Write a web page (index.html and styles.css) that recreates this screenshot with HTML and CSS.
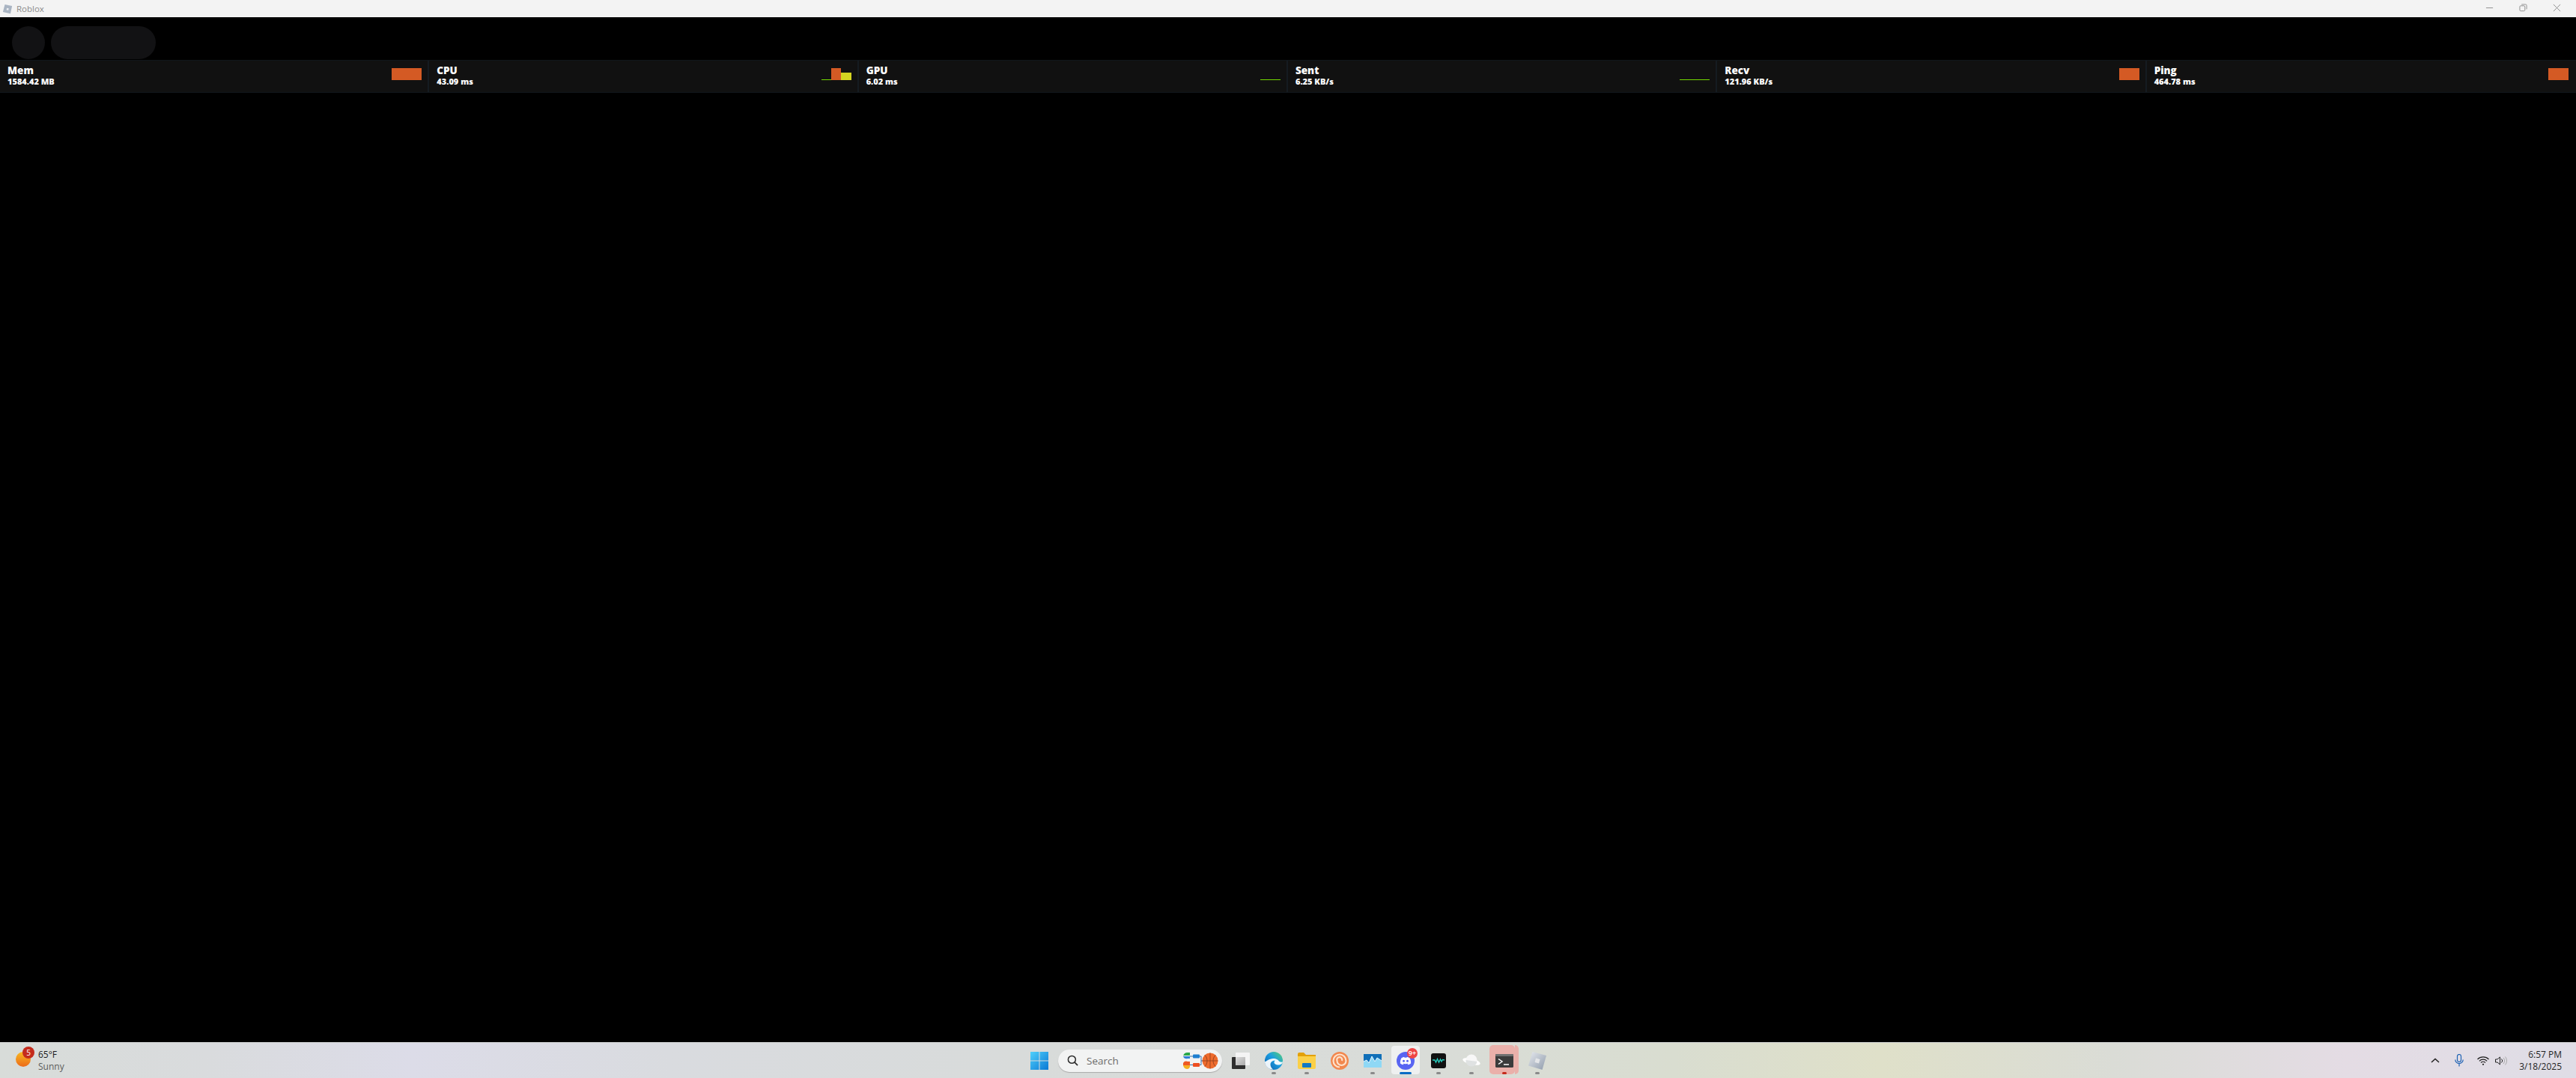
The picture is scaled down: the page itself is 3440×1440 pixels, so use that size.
FILE: index.html
```html
<!doctype html>
<html>
<head>
    <meta charset="utf-8">
    <title>Roblox</title>
    <link rel="stylesheet" href="styles.css">
</head>
<body>
<div class="screen">

    <div class="titlebar">
        <svg class="app-logo" viewBox="0 0 16 16"><path d="M4 1 15 3.500 12.500 15 1 12.500z" fill="#a9b4c2"/><path d="M7 6.500 10 7.200 9.300 10 6.400 9.400z" fill="#eef0f3"/></svg>
        <span class="app-name">Roblox</span>
        <div class="win-btns">
            <svg viewBox="0 0 12 12"><path d="M1 6h10" stroke="#8a8a8a" fill="none"/></svg>
            <svg viewBox="0 0 12 12"><rect x="1" y="3" width="7.500" height="7.500" rx="1.500" stroke="#8a8a8a" fill="none"/><path d="M3.500 1H9.500A1.500 1.500 0 0 1 11 2.500V8" stroke="#8a8a8a" fill="none"/></svg>
            <svg viewBox="0 0 12 12"><path d="M1 1 11 11M11 1 1 11" stroke="#8a8a8a" fill="none"/></svg>
        </div>
    </div>

    <div class="game">
        <div class="topbar">
            <div class="top-circle"></div>
            <div class="top-pill"></div>
        </div>

        <div class="stats">
            <div class="stat">
                <div class="stat-text"><div class="stat-name">Mem</div><div class="stat-val">1584.42 MB</div></div>
                <div class="graph"><i class="bar red wide"></i></div>
            </div>
            <div class="stat">
                <div class="stat-text"><div class="stat-name">CPU</div><div class="stat-val">43.09 ms</div></div>
                <div class="graph"><i class="bar green w13"></i><i class="bar red w13"></i><i class="bar yellow w14"></i></div>
            </div>
            <div class="stat">
                <div class="stat-text"><div class="stat-name">GPU</div><div class="stat-val">6.02 ms</div></div>
                <div class="graph"><i class="bar green w27"></i></div>
            </div>
            <div class="stat">
                <div class="stat-text"><div class="stat-name">Sent</div><div class="stat-val">6.25 KB/s</div></div>
                <div class="graph"><i class="bar green wide"></i></div>
            </div>
            <div class="stat">
                <div class="stat-text"><div class="stat-name">Recv</div><div class="stat-val">121.96 KB/s</div></div>
                <div class="graph"><i class="bar red w27"></i></div>
            </div>
            <div class="stat">
                <div class="stat-text"><div class="stat-name">Ping</div><div class="stat-val">464.78 ms</div></div>
                <div class="graph"><i class="bar red w27"></i></div>
            </div>
        </div>
    </div>

    <div class="taskbar">
        <div class="weather">
            <div class="sun"><span class="sun-badge">5</span></div>
            <div class="weather-text">
                <div class="temp">65°F</div>
                <div class="cond">Sunny</div>
            </div>
        </div>

        <div class="apps">
            <div class="cell start">
                <svg class="i24" viewBox="0 0 24 24"><defs><linearGradient id="win" x1="0" y1="0" x2="1" y2="1"><stop offset="0" stop-color="#4fd0fb"/><stop offset="1" stop-color="#0a78d4"/></linearGradient></defs><path d="M0 0H11.500V11.500H0zM12.500 0H24V11.500H12.500zM0 12.500H11.500V24H0zM12.500 12.500H24V24H12.500z" fill="url(#win)"/></svg>
            </div>

            <div class="search">
                <svg class="search-ico" viewBox="0 0 16 16"><circle cx="6.800" cy="6.800" r="5.300" stroke="#2b2b2b" stroke-width="1.600" fill="none"/><path d="M10.800 10.800 15 15" stroke="#2b2b2b" stroke-width="1.800" fill="none"/></svg>
                <span class="search-text">Search</span>
                <svg class="search-art" viewBox="0 0 48 24">
                    <path d="M1 6a6 6 0 0 1 6-5h3v4H1z" fill="#2aa84a"/><path d="M1 6h9v3H7a5 5 0 0 1-6-3z" fill="#2f7fd6"/>
                    <path d="M1 15a5 5 0 0 1 6-2h3v5H1z" fill="#ee5a24"/><path d="M1 18h9v2a4 4 0 0 1-3 3 6 6 0 0 1-6-5z" fill="#f5b021"/>
                    <rect x="14" y="3.500" width="9" height="5" rx="1" fill="#1f7fd0"/><rect x="14" y="15" width="9" height="5" rx="1" fill="#ee4f22"/>
                    <path d="M10 6h4M10 17.500h4M23 6h2v11.500h-2M25 12h3" stroke="#3a6ea8" fill="none"/>
                    <circle cx="37" cy="12" r="10.500" fill="#ee6c2e"/>
                    <path d="M26.500 12h21M37 1.500v21M30 4.500c4 4 4 11 0 15M44 4.500c-4 4-4 11 0 15" stroke="#8d3c1c" stroke-width=".8" fill="none"/>
                </svg>
            </div>

            <div class="cell">
                <svg class="i24" viewBox="0 0 24 22"><defs><linearGradient id="tv" x1="0" y1="0" x2="1" y2="1"><stop offset="0" stop-color="#dedede"/><stop offset="1" stop-color="#a9a9a9"/></linearGradient></defs><rect x="0" y="6" width="18" height="16" rx="1" fill="#2e2e2e"/><rect x="5" y="0" width="19" height="17" rx="1" fill="#f4f4f4"/><rect x="5" y="6" width="13" height="11" fill="url(#tv)"/></svg>
            </div>

            <div class="cell">
                <svg class="i24" viewBox="0 0 24 24"><defs><linearGradient id="edge" x1="0" y1="1" x2="1" y2="0"><stop offset="0" stop-color="#0c59a4"/><stop offset=".55" stop-color="#1b9de2"/><stop offset="1" stop-color="#5ad36b"/></linearGradient></defs><circle cx="12" cy="12" r="12" fill="url(#edge)"/><path d="M24 13c0 3-3 4.500-6 4.500-3 0-5.500-1.500-5.500-3.500 0-1.200 1-2 1.500-2.300C10 11.300 7.500 14 7.500 17c0 2 1 4.500 3.500 6.500-5 .5-11-4-11-11C0 15 5 9 11 9c5 0 7 2 8 3.500 1.500 1.500 5 1.500 5 .5z" fill="#fff" opacity=".92"/></svg>
                <i class="dot"></i>
            </div>

            <div class="cell">
                <svg class="i24" viewBox="0 0 24 22"><path d="M0 2A2 2 0 0 1 2 0H8L11 3H24V6H0z" fill="#e3a008"/><path d="M0 5H24V20A2 2 0 0 1 22 22H2A2 2 0 0 1 0 20z" fill="#fbd048"/><rect x="6" y="14" width="12" height="6" rx="1" fill="#1279c4"/></svg>
                <i class="dot"></i>
            </div>

            <div class="cell">
                <svg class="i24" viewBox="0 0 24 24"><circle cx="12" cy="12" r="12" fill="#f2884e"/><path d="M12 20.500A8.500 8.500 0 1 1 20.500 12 6 6 0 1 1 8.500 12 3.500 3.500 0 1 1 15 12" stroke="#fde2cc" stroke-width="2.200" fill="none"/></svg>
            </div>

            <div class="cell">
                <svg class="i24" viewBox="0 0 24 18"><rect width="24" height="18" fill="#0f6fb8"/><path d="M0 18V10L4 8 7 12 11 3 15 10 18 5 24 9V18z" fill="#8fd8f5"/><path d="M0 10 4 8 7 12 11 3 15 10 18 5 24 9" stroke="#e6f7ff" fill="none"/></svg>
                <i class="dot"></i>
            </div>

            <div class="cell active">
                <svg class="i24" viewBox="0 0 24 24"><circle cx="12" cy="12" r="12" fill="#5865f2"/><path d="M6.500 8.300C8 7.300 9.500 7 10.200 7l.4.8c1-.2 1.800-.2 2.800 0l.4-.8c.7 0 2.200.3 3.700 1.300 1.300 2.300 1.800 4.800 1.600 7.300-1.300 1-2.600 1.500-3.800 1.700l-.8-1.300c.5-.2.900-.4 1.300-.7-2.800 1.200-5 1.200-7.600 0 .4.300.8.500 1.300.7l-.8 1.300c-1.200-.2-2.500-.7-3.800-1.700-.2-2.500.3-5 1.600-7.300z" fill="#fff"/><circle cx="9.500" cy="12.300" r="1.500" fill="#5865f2"/><circle cx="14.500" cy="12.300" r="1.500" fill="#5865f2"/></svg>
                <span class="app-badge">9+</span>
                <i class="underline"></i>
            </div>

            <div class="cell">
                <svg class="i20" viewBox="0 0 20 20"><rect width="20" height="20" rx="3" fill="#111"/><path d="M2 9 5 9 6.500 12 8.500 7.500 10.500 12 12.500 8 14 11 15.500 8.500 18 9" stroke="#27cfc0" stroke-width="1.400" fill="none"/></svg>
                <i class="dot"></i>
            </div>

            <div class="cell">
                <svg class="i24" viewBox="0 0 24 20"><ellipse cx="12" cy="11" rx="12" ry="4" fill="#fff" transform="rotate(14 12 11)"/><circle cx="12" cy="9" r="7.500" fill="#f7f7f7"/><path d="M4.500 9a7.500 7.500 0 0 0 15 2" fill="#dfe2e2"/></svg>
                <i class="dot"></i>
            </div>

            <div class="cell running">
                <span class="stack"></span>
                <svg class="i24" viewBox="0 0 24 18"><rect width="24" height="18" rx="1.500" fill="#3b3b3b"/><rect width="24" height="3" rx="1" fill="#707070"/><path d="M4 6.500 9 10 4 13.500" stroke="#fff" stroke-width="1.500" fill="none"/><path d="M11 14H18" stroke="#fff" stroke-width="1.500"/></svg>
                <i class="dot red-dot"></i>
            </div>

            <div class="cell">
                <svg class="i24" viewBox="0 0 24 24"><defs><linearGradient id="rbx" x1="0" y1="0" x2="1" y2="1"><stop offset="0" stop-color="#e6e9ee"/><stop offset="1" stop-color="#8f9bab"/></linearGradient></defs><path d="M5.500 0 24 5 18.500 24 0 18.500z" fill="url(#rbx)"/><path d="M10 8.500 15.500 10 14 15.500 8.500 14z" fill="#e3e5e8"/></svg>
                <i class="dot"></i>
            </div>
        </div>

        <div class="tray">
            <svg class="chev" viewBox="0 0 12 7"><path d="M1 6 6 1.500 11 6" stroke="#222" stroke-width="1.500" fill="none"/></svg>
            <svg class="mic" viewBox="0 0 12 17"><rect x="3.500" y=".500" width="5" height="10" rx="2.500" stroke="#1e62b4" stroke-width="1.200" fill="none"/><path d="M.800 7.500A5.200 5.200 0 0 0 11.200 7.500M6 12.800V16.500" stroke="#1e62b4" stroke-width="1.200" fill="none"/></svg>
            <svg class="wifi" viewBox="0 0 16 12"><path d="M.500 4A10.500 10.500 0 0 1 15.500 4M2.800 6.300A7.300 7.300 0 0 1 13.200 6.300M5 8.500A4.200 4.200 0 0 1 11 8.500" stroke="#222" stroke-width="1.100" fill="none"/><circle cx="8" cy="10.800" r="1.100" fill="#222"/></svg>
            <svg class="vol" viewBox="0 0 16 12"><path d="M.500 4H3L6.500 1V11L3 8H.500z" stroke="#222" fill="none"/><path d="M8.500 3.500A3.500 3.500 0 0 1 8.500 8.500" stroke="#222" fill="none"/><path d="M11 2A6 6 0 0 1 11 10M13.500 .5A8.500 8.500 0 0 1 13.500 11.500" stroke="#aaa" fill="none"/></svg>
            <div class="clock">
                <div>6:57 PM</div>
                <div>3/18/2025</div>
            </div>
        </div>
    </div>

</div>
</body>
</html>
```

FILE: styles.css
```css
html, body {
    margin:0;
    padding:0;
    background:#000;
}

.screen {
    width:3440px;
    height:1440px;
    display:flex;
    flex-direction:column;
    overflow:hidden;
}

/* window title */
.titlebar {
    height:23px;
    flex:none;
    display:flex;
    align-items:center;
    background:#f3f3f3;
    padding-left:3px;
}

.app-logo {
    width:14px;
    height:14px;
}

.app-name {
    margin-left:5px;
    font:11.500px "Open Sans", sans-serif;
    color:#8b8b8b;
}

.win-btns {
    margin-left:auto;
    display:flex;
    align-items:center;
    gap:34px;
    padding-right:20px;
    margin-bottom:3px;
}

.win-btns svg {
    width:11px;
    height:11px;
}

/* game area */
.game {
    flex:1;
    background:#000;
}

.topbar {
    height:57px;
    display:flex;
    gap:8px;
    padding:12px 0 0 16px;
    box-sizing:border-box;
}

.top-circle {
    width:44px;
    height:44px;
    border-radius:50%;
    background:#121214;
}

.top-pill {
    width:140px;
    height:44px;
    border-radius:22px;
    background:#121214;
}

.stats {
    height:44px;
    display:grid;
    grid-template-columns:repeat(6, 1fr);
    background:#111;
    box-sizing:border-box;
    border-top:1px solid #11161b;
    border-bottom:1px solid #11161b;
}

.stat {
    display:flex;
    justify-content:space-between;
    align-items:flex-start;
    padding-left:10px;
    padding-right:8px;
    box-sizing:border-box;
    border-right:2px solid #151b21;
}

.stat:last-child {
    border-right:0;
    padding-right:10px;
}

.stat-name {
    font:800 13.500px/15px "Open Sans", sans-serif;
    color:#fff;
    margin-top:6px;
}

.stat-val {
    font:800 11px/14px "Open Sans", sans-serif;
    color:#fff;
}

.graph {
    width:40px;
    height:16px;
    margin-top:10px;
    display:flex;
    justify-content:flex-end;
    align-items:flex-end;
}

.bar {
    display:block;
    height:16px;
}

.wide { width:40px; }
.w27 { width:27px; }
.w13 { width:13px; }
.w14 { width:14px; }

.red { background:#d45a24; }
.yellow { background:#d4d421; height:10px; }
.green { background:#72d800; height:1px; }

/* taskbar */
.taskbar {
    height:48px;
    flex:none;
    display:grid;
    grid-template-columns:1fr auto 1fr;
    align-items:center;
    background:linear-gradient(90deg, #d8dcd9 0%, #d9dbdd 8%, #dcdce8 16%, #d9dbdf 26%, #d8dbda 40%, #d9dcd8 55%, #d9ddd0 65%, #dfe0c9 73%, #dadcd6 82%, #e4dce4 91%, #dfdde6 100%);
    border-top:1px solid #c9cbcb;
    box-sizing:border-box;
    font-family:"Open Sans", sans-serif;
}

.weather {
    display:flex;
    padding-left:21px;
    gap:10px;
}

.sun {
    position:relative;
    width:20px;
    height:20px;
    border-radius:50%;
    background:linear-gradient(#f8b921, #ec6a1a);
    margin-top:4px;
}

.sun-badge {
    position:absolute;
    left:9px;
    top:-7px;
    width:16px;
    height:16px;
    border-radius:50%;
    background:#c42b1c;
    color:#fff;
    font-size:10px;
    line-height:16px;
    text-align:center;
}

.temp {
    font-size:12px;
    line-height:16px;
    color:#1a1a1a;
}

.cond {
    font-size:12px;
    line-height:16px;
    color:#5c5c5c;
}

.apps {
    display:flex;
    align-items:center;
    height:47px;
    padding-left:5px;
}

.cell {
    position:relative;
    width:44px;
    height:47px;
    display:flex;
    align-items:center;
    justify-content:center;
    flex:none;
}

.start {
    width:36px;
    margin-right:7px;
}

.i24 {
    width:24px;
    height:24px;
    position:relative;
}

.i20 {
    width:20px;
    height:20px;
}

.dot {
    position:absolute;
    left:19px;
    bottom:5px;
    width:6px;
    height:3px;
    border-radius:2px;
    background:#8a8a8a;
}

.red-dot {
    background:#c42b1c;
}

.search {
    width:219px;
    height:30px;
    display:flex;
    align-items:center;
    margin-right:3px;
    border-radius:15px;
    background:#f2f3f3;
    box-shadow:0 1px 1px #aaa;
    box-sizing:border-box;
    padding-left:12px;
    padding-right:5px;
}

.search-ico {
    width:15px;
    height:15px;
}

.search-text {
    margin-left:11px;
    font-size:13.500px;
    color:#6a6a6a;
}

.search-art {
    margin-left:auto;
    width:48px;
    height:24px;
}

.active::before {
    content:"";
    position:absolute;
    left:3px;
    top:4px;
    width:38px;
    height:38px;
    border-radius:4px;
    background:#eef0f0;
}

.app-badge {
    position:absolute;
    left:24px;
    top:7px;
    width:14px;
    height:14px;
    border-radius:50%;
    background:#ef4444;
    color:#fff;
    font-size:9px;
    font-weight:600;
    line-height:14px;
    text-align:center;
}

.underline {
    position:absolute;
    left:14px;
    bottom:5px;
    width:16px;
    height:3px;
    border-radius:2px;
    background:#0a6cc4;
}

.running::before {
    content:"";
    position:absolute;
    left:2px;
    top:3px;
    width:34px;
    height:39px;
    border-radius:5px;
    background:#eab0aa;
}

.stack {
    position:absolute;
    left:36px;
    top:3px;
    width:5px;
    height:39px;
    border-radius:0 5px 5px 0;
    background:#eab0aa;
}

.tray {
    display:flex;
    align-items:center;
    justify-content:flex-end;
    padding-right:19px;
}

.chev {
    width:12px;
    height:7px;
    margin-right:20px;
}

.mic {
    width:12px;
    height:17px;
    margin-right:18px;
}

.wifi {
    width:16px;
    height:12px;
    margin-right:8px;
}

.vol {
    width:16px;
    height:12px;
    margin-right:16px;
}

.clock {
    font-size:12px;
    line-height:16px;
    text-align:right;
    color:#1f1f1f;
}
```
